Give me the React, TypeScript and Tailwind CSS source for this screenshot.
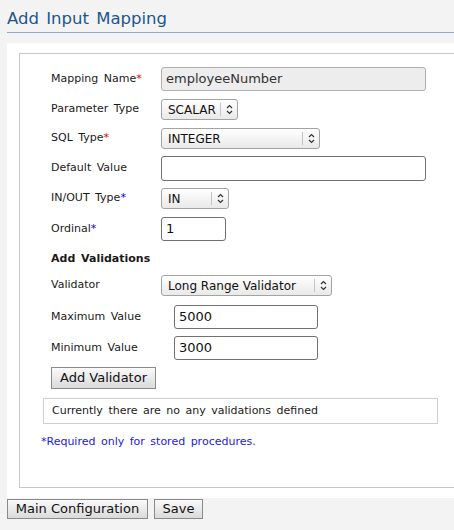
import React from 'react';

const font = "font-['DejaVu_Sans',sans-serif]";

function Chevrons() {
  return (
    <svg width="7" height="11" viewBox="0 0 7 11" fill="none" stroke="#333" strokeWidth="1.2">
      <path d="M1 4 L3.5 1.5 L6 4" />
      <path d="M1 7 L3.5 9.5 L6 7" />
    </svg>
  );
}

function Select({ value, width }: { value: string; width: number }) {
  return (
    <div
      className="flex h-[21px] items-center rounded-[3px] border border-[#a3a3a3] bg-gradient-to-b from-[#ffffff] to-[#e9e9e9] text-[12px] text-[#111]"
      style={{ width }}
    >
      <span className="flex-1 whitespace-nowrap pl-[6px] leading-none">{value}</span>
      <span className="h-[13px] w-px bg-[#c4c4c4]" />
      <span className="flex w-[16px] justify-center">
        <Chevrons />
      </span>
    </div>
  );
}

function Input({ value, width, gray }: { value?: string; width: number; gray?: boolean }) {
  return (
    <div
      className={
        'flex h-[24px] items-center rounded-[3px] border pl-[4px] text-[13px] ' +
        (gray ? 'border-[#b0b0b0] bg-[#ededed] text-[#333]' : 'border-[#707070] bg-white text-[#111]')
      }
      style={{ width }}
    >
      {value}
    </div>
  );
}

function Label({ children, star }: { children: React.ReactNode; star?: 'red' | 'blue' }) {
  return (
    <div className="w-[110px] shrink-0 text-[11px] text-[#1a1a1a] [word-spacing:2px]">
      {children}
      {star === 'red' && <span className="text-[#e00000]">*</span>}
      {star === 'blue' && <span className="text-[#0000ee]">*</span>}
    </div>
  );
}

export default function App() {
  return (
    <div className={`min-h-[530px] w-[454px] overflow-hidden bg-[#f3f3f3] ${font}`}>
      <div className="ml-[7px] pt-[8px]">
        <h1 className="h-[24px] text-[16.5px] leading-[22px] text-[#1c568c] [word-spacing:2px]">Add Input Mapping</h1>
        <div className="h-px bg-[#94a8cd]" />

        <div className="mt-[10px] bg-white pb-[10px] pl-[12px] pt-[10px]">
          <div className="border-b border-l border-t border-[#c8c8c8] pb-[36px] pl-[31px] pt-[13px]">
            <div className="flex h-[24px] items-center">
              <Label star="red">Mapping Name</Label>
              <Input value="employeeNumber" width={265} gray />
            </div>
            <div className="mt-[8px] flex h-[21px] items-center">
              <Label>Parameter Type</Label>
              <Select value="SCALAR" width={77} />
            </div>
            <div className="mt-[8px] flex h-[21px] items-center">
              <Label star="red">SQL Type</Label>
              <Select value="INTEGER" width={159} />
            </div>
            <div className="mt-[7px] flex h-[25px] items-center">
              <Label>Default Value</Label>
              <div className="h-[25px] w-[265px] rounded-[3px] border border-[#707070] bg-white" />
            </div>
            <div className="mt-[7px] flex h-[21px] items-center">
              <Label star="blue">IN/OUT Type</Label>
              <Select value="IN" width={68} />
            </div>
            <div className="mt-[8px] flex h-[24px] items-center">
              <Label star="blue">Ordinal</Label>
              <Input value="1" width={65} />
            </div>
            <div className="mt-[8px] flex h-[20px] items-center text-[11px] font-bold text-[#1a1a1a] [word-spacing:2px]">
              Add Validations
            </div>
            <div className="mt-[6px] flex h-[21px] items-center">
              <Label>Validator</Label>
              <Select value="Long Range Validator" width={171} />
            </div>
            <div className="mt-[9px] flex h-[24px] items-center">
              <div className="w-[123px] shrink-0 text-[11px] text-[#1a1a1a] [word-spacing:2px]">Maximum Value</div>
              <Input value="5000" width={144} />
            </div>
            <div className="mt-[7px] flex h-[24px] items-center">
              <div className="w-[123px] shrink-0 text-[11px] text-[#1a1a1a] [word-spacing:2px]">Minimum Value</div>
              <Input value="3000" width={144} />
            </div>
            <button className="mt-[7px] flex h-[22px] w-[105px] items-center justify-center border border-[#8a8a8a] bg-gradient-to-b from-[#fafafa] to-[#dadada] text-[13px] text-[#111]">
              Add Validator
            </button>
            <div className="-ml-[8px] mt-[9px] flex h-[26px] w-[395px] items-center border border-[#cfcfcf] pl-[8px] pt-px text-[11px] text-[#1a1a1a] [word-spacing:2px]">
              Currently there are no any validations defined
            </div>
            <div className="-ml-[10px] mt-[10px] text-[11px] text-[#2222dd] [word-spacing:2px]">
              *Required only for stored procedures.
            </div>
          </div>
        </div>

        <div className="mt-[1px] flex gap-[6px]">
          <button className="flex h-[20px] w-[141px] items-center justify-center border border-[#8a8a8a] bg-gradient-to-b from-[#fafafa] to-[#dadada] text-[13px] text-[#111]">
            Main Configuration
          </button>
          <button className="flex h-[20px] w-[49px] items-center justify-center border border-[#8a8a8a] bg-gradient-to-b from-[#fafafa] to-[#dadada] text-[13px] text-[#111]">
            Save
          </button>
        </div>
      </div>
    </div>
  );
}
